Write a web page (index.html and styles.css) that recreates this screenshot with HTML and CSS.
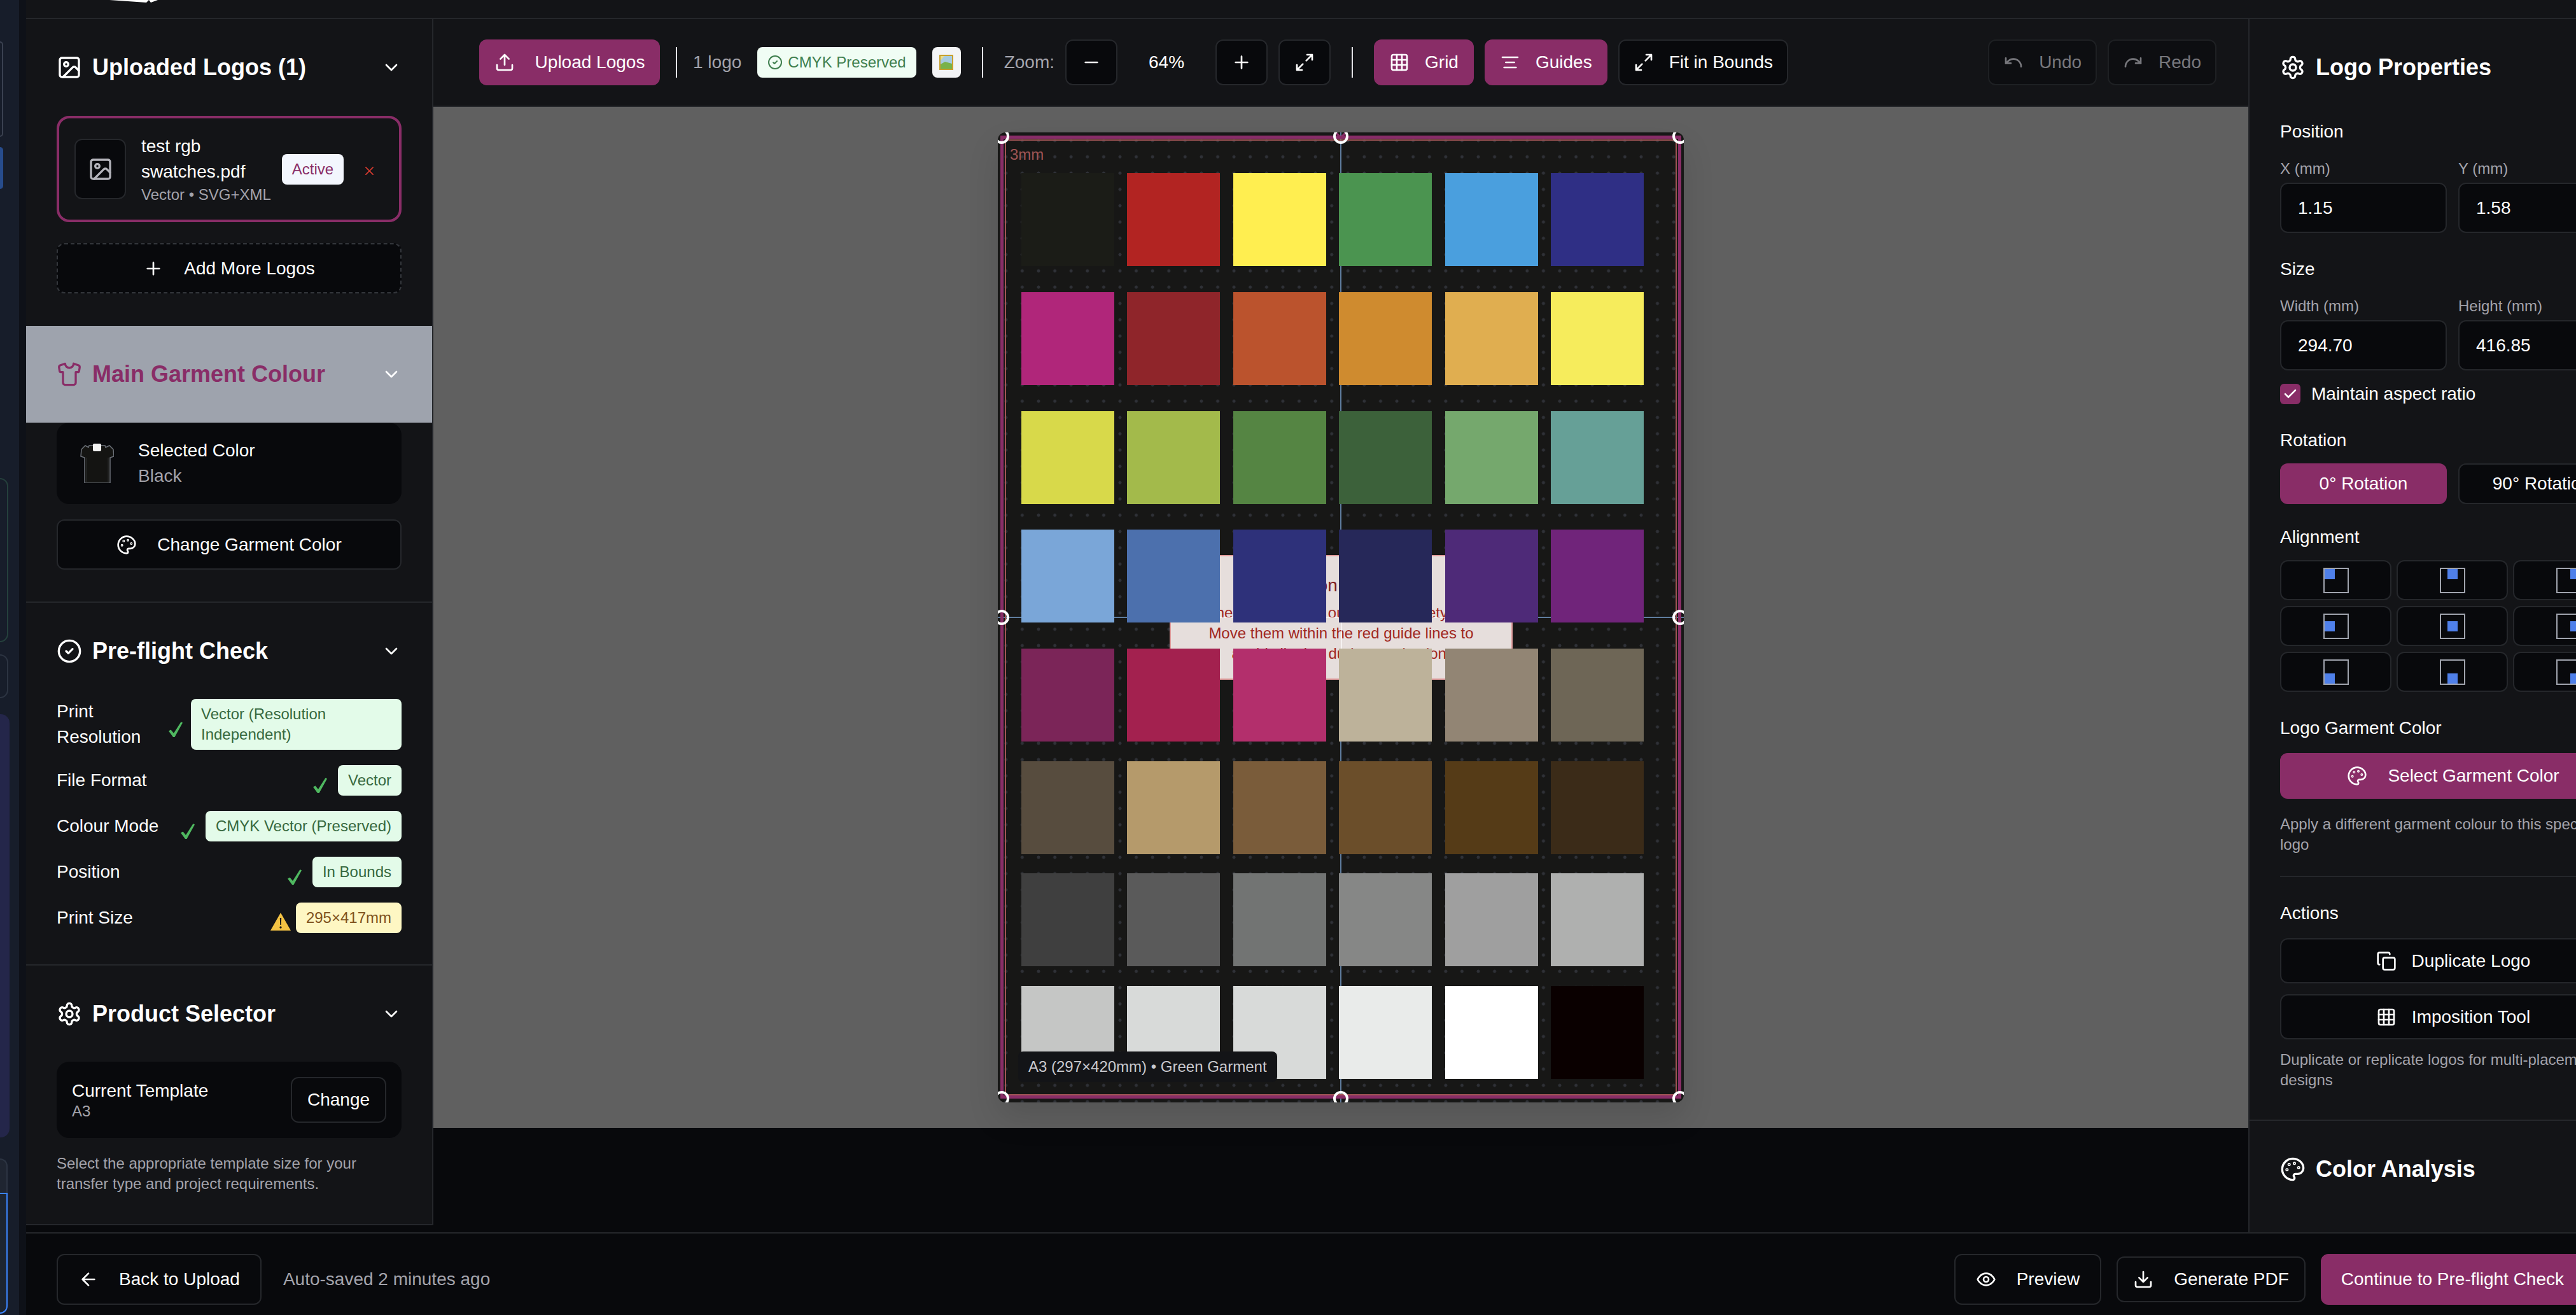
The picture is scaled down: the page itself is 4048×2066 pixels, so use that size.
FILE: index.html
```html
<!DOCTYPE html>
<html lang="en">
<head>
    <meta charset="UTF-8">
    <title>Logo Editor</title>
    <link rel="stylesheet" href="styles.css">
</head>
<body>

    <svg class="sprite" xmlns="http://www.w3.org/2000/svg">
        <symbol id="i-image" viewBox="0 0 24 24"><rect x="3" y="3" width="18" height="18" rx="2"/><circle cx="9" cy="9" r="2"/><path d="m21 15-3.086-3.086a2 2 0 0 0-2.828 0L6 21"/></symbol>
        <symbol id="i-chevron" viewBox="0 0 24 24"><path d="m6 9 6 6 6-6"/></symbol>
        <symbol id="i-plus" viewBox="0 0 24 24"><path d="M5 12h14M12 5v14"/></symbol>
        <symbol id="i-minus" viewBox="0 0 24 24"><path d="M5 12h14"/></symbol>
        <symbol id="i-shirt" viewBox="0 0 24 24"><path d="M20.38 3.46 16 2a4 4 0 0 1-8 0L3.62 3.46a2 2 0 0 0-1.34 2.23l.58 3.47a1 1 0 0 0 .99.84H6v10c0 1.1.9 2 2 2h8a2 2 0 0 0 2-2V10h2.15a1 1 0 0 0 .99-.84l.58-3.47a2 2 0 0 0-1.34-2.23z"/></symbol>
        <symbol id="i-palette" viewBox="0 0 24 24"><circle cx="13.5" cy="6.5" r=".5"/><circle cx="17.5" cy="10.5" r=".5"/><circle cx="8.5" cy="7.5" r=".5"/><circle cx="6.5" cy="12.5" r=".5"/><path d="M12 2C6.5 2 2 6.5 2 12s4.5 10 10 10c.926 0 1.648-.746 1.648-1.688 0-.437-.18-.835-.437-1.125-.29-.289-.438-.652-.438-1.125a1.64 1.64 0 0 1 1.668-1.668h1.996c3.051 0 5.555-2.503 5.555-5.554C21.965 6.012 17.461 2 12 2z"/></symbol>
        <symbol id="i-circle-check" viewBox="0 0 24 24"><circle cx="12" cy="12" r="10"/><path d="m9 12 2 2 4-4"/></symbol>
        <symbol id="i-gear" viewBox="0 0 24 24"><path d="M12.22 2h-.44a2 2 0 0 0-2 2v.18a2 2 0 0 1-1 1.73l-.43.25a2 2 0 0 1-2 0l-.15-.08a2 2 0 0 0-2.73.73l-.22.38a2 2 0 0 0 .73 2.73l.15.1a2 2 0 0 1 1 1.72v.51a2 2 0 0 1-1 1.74l-.15.09a2 2 0 0 0-.73 2.73l.22.38a2 2 0 0 0 2.73.73l.15-.08a2 2 0 0 1 2 0l.43.25a2 2 0 0 1 1 1.73V20a2 2 0 0 0 2 2h.44a2 2 0 0 0 2-2v-.18a2 2 0 0 1 1-1.73l.43-.25a2 2 0 0 1 2 0l.15.08a2 2 0 0 0 2.73-.73l.22-.39a2 2 0 0 0-.73-2.73l-.15-.08a2 2 0 0 1-1-1.74v-.5a2 2 0 0 1 1-1.74l.15-.09a2 2 0 0 0 .73-2.73l-.22-.38a2 2 0 0 0-2.73-.73l-.15.08a2 2 0 0 1-2 0l-.43-.25a2 2 0 0 1-1-1.73V4a2 2 0 0 0-2-2z"/><circle cx="12" cy="12" r="3"/></symbol>
        <symbol id="i-upload" viewBox="0 0 24 24"><path d="M21 15v4a2 2 0 0 1-2 2H5a2 2 0 0 1-2-2v-4M17 8l-5-5-5 5M12 3v12"/></symbol>
        <symbol id="i-download" viewBox="0 0 24 24"><path d="M21 15v4a2 2 0 0 1-2 2H5a2 2 0 0 1-2-2v-4M7 10l5 5 5-5M12 15V3"/></symbol>
        <symbol id="i-expand" viewBox="0 0 24 24"><path d="M15 3h6v6M9 21H3v-6M21 3l-7 7M3 21l7-7"/></symbol>
        <symbol id="i-grid" viewBox="0 0 24 24"><rect x="3" y="3" width="18" height="18" rx="2"/><path d="M3 9h18M3 15h18M9 3v18M15 3v18"/></symbol>
        <symbol id="i-guides" viewBox="0 0 24 24"><path d="M21 6H3M17 12H7M19 18H5"/></symbol>
        <symbol id="i-undo" viewBox="0 0 24 24"><path d="M3 7v6h6"/><path d="M21 17a9 9 0 0 0-9-9 9 9 0 0 0-6 2.3L3 13"/></symbol>
        <symbol id="i-redo" viewBox="0 0 24 24"><path d="M21 7v6h-6"/><path d="M3 17a9 9 0 0 1 9-9 9 9 0 0 1 6 2.3l3 2.7"/></symbol>
        <symbol id="i-back" viewBox="0 0 24 24"><path d="m12 19-7-7 7-7M19 12H5"/></symbol>
        <symbol id="i-eye" viewBox="0 0 24 24"><path d="M2 12s3-7 10-7 10 7 10 7-3 7-10 7-10-7-10-7Z"/><circle cx="12" cy="12" r="3"/></symbol>
        <symbol id="i-copy" viewBox="0 0 24 24"><rect x="8" y="8" width="14" height="14" rx="2"/><path d="M4 16c-1.1 0-2-.9-2-2V4c0-1.1.9-2 2-2h10c1.1 0 2 .9 2 2"/></symbol>
        <symbol id="i-tick" viewBox="0 0 22 24"><path class="fill" d="M0 14.5 3.5 12.5 8 18 19.5 0 22 1.500 9.500 24H7z"/></symbol>
    </svg>

    <!-- the previous step's sidebar, mostly scrolled off the left edge -->
    <aside class="rail">
        <div class="rail-frag rail-frag-1"></div>
        <div class="rail-frag rail-frag-2"></div>
        <div class="rail-frag rail-frag-3"></div>
        <div class="rail-frag rail-frag-4"></div>
        <div class="rail-frag rail-frag-5"></div>
        <div class="rail-frag rail-frag-6"></div>
        <div class="rail-frag rail-frag-7"></div>
    </aside>

    <div class="app">
        <div class="topbar">
            <svg class="topbar-logo" viewBox="0 0 76 5"><path d="M0 0H76L65 4 62 0 58 4z"/></svg>
        </div>

        <div class="workspace">

            <section class="left-panel">
                <div class="section section-logos">
                    <div class="section-head">
                        <svg class="ico ico-head"><use href="#i-image"/></svg>
                        <h2>Uploaded Logos (1)</h2>
                        <svg class="ico chevron"><use href="#i-chevron"/></svg>
                    </div>
                    <div class="logo-card">
                        <div class="logo-thumb"><svg class="ico ico-head"><use href="#i-image"/></svg></div>
                        <div class="logo-info">
                            <div class="logo-name">test rgb swatches.pdf</div>
                            <div class="logo-meta">Vector • SVG+XML</div>
                        </div>
                        <span class="active-pill">Active</span>
                        <svg class="ico remove" viewBox="0 0 24 24"><path d="M3 3l18 18M21 3 3 21"/></svg>
                    </div>
                    <button class="btn btn-wide btn-dashed"><svg class="ico"><use href="#i-plus"/></svg>Add More Logos</button>
                </div>

                <div class="section section-garment">
                    <div class="section-head head-hover">
                        <svg class="ico ico-head"><use href="#i-shirt"/></svg>
                        <h2>Main Garment Colour</h2>
                        <svg class="ico chevron"><use href="#i-chevron"/></svg>
                    </div>
                    <div class="garment-box">
                        <svg class="tee" viewBox="0 0 53 62">
                            <path class="tee-body" d="M14 3H39L40 6 46 3 52 9 53 20 47 22V62H7V22L1 20 2 9 8 3 13 6z"/>
                            <path class="tee-line" d="M10 22V60M44 22V60"/>
                            <rect class="tee-tag" x="20" width="13" height="12" rx="2"/>
                        </svg>
                        <div>
                            <div class="garment-title">Selected Color</div>
                            <div class="garment-value">Black</div>
                        </div>
                    </div>
                    <button class="btn btn-wide btn-change"><svg class="ico"><use href="#i-palette"/></svg>Change Garment Color</button>
                </div>

                <div class="section section-check">
                    <div class="section-head">
                        <svg class="ico ico-head"><use href="#i-circle-check"/></svg>
                        <h2>Pre-flight Check</h2>
                        <svg class="ico chevron"><use href="#i-chevron"/></svg>
                    </div>
                    <div class="check-row row-tight">
                        <span class="check-label">Print Resolution</span>
                        <svg class="tick"><use href="#i-tick"/></svg>
                        <span class="pill pill-wide">Vector (Resolution Independent)</span>
                    </div>
                    <div class="check-row">
                        <span class="check-label">File Format</span>
                        <svg class="tick"><use href="#i-tick"/></svg>
                        <span class="pill">Vector</span>
                    </div>
                    <div class="check-row">
                        <span class="check-label">Colour Mode</span>
                        <svg class="tick"><use href="#i-tick"/></svg>
                        <span class="pill">CMYK Vector (Preserved)</span>
                    </div>
                    <div class="check-row">
                        <span class="check-label">Position</span>
                        <svg class="tick"><use href="#i-tick"/></svg>
                        <span class="pill">In Bounds</span>
                    </div>
                    <div class="check-row">
                        <span class="check-label">Print Size</span>
                        <svg class="warn-ico" viewBox="0 0 32 28">
                            <path class="warn-tri" d="M16 0 32 28H0z"/>
                            <path class="warn-mark" d="M14.800 8h2.400l-.4 11h-1.600z"/>
                            <circle class="warn-mark" cx="16" cy="23" r="1.700"/>
                        </svg>
                        <span class="pill pill-warn">295×417mm</span>
                    </div>
                </div>

                <div class="section section-product">
                    <div class="section-head">
                        <svg class="ico ico-head"><use href="#i-gear"/></svg>
                        <h2>Product Selector</h2>
                        <svg class="ico chevron"><use href="#i-chevron"/></svg>
                    </div>
                    <div class="template-box">
                        <div>
                            <div class="template-title">Current Template</div>
                            <div class="template-value">A3</div>
                        </div>
                        <button class="btn btn-small">Change</button>
                    </div>
                    <p class="help">Select the appropriate template size for your transfer type and project requirements.</p>
                </div>
            </section>

            <section class="center">
                <div class="toolbar">
                    <div class="tool-group tool-group-first">
                        <button class="btn btn-primary btn-upload"><svg class="ico"><use href="#i-upload"/></svg>Upload Logos</button>
                        <span class="vr"></span>
                        <span class="muted">1 logo</span>
                        <span class="cmyk-pill"><svg class="ico ico-sm"><use href="#i-circle-check"/></svg>CMYK Preserved</span>
                        <span class="thumb-chip">
                            <svg viewBox="0 0 22 24" class="frame">
                                <rect width="22" height="24" fill="#c7a02e"/>
                                <rect x="2" y="2" width="18" height="20" fill="#a7cbe0"/>
                                <path d="M2 15 9 11 20 14V22H2z" fill="#79b24a"/>
                                <path d="M2 2H8L3 8 2 8z" fill="#e8dc8a"/>
                            </svg>
                        </span>
                    </div>
                    <span class="vr"></span>
                    <div class="tool-group">
                        <span class="muted">Zoom:</span>
                        <button class="btn btn-icon"><svg class="ico"><use href="#i-minus"/></svg></button>
                        <span class="zoom-value">64%</span>
                        <button class="btn btn-icon"><svg class="ico"><use href="#i-plus"/></svg></button>
                        <button class="btn btn-icon"><svg class="ico"><use href="#i-expand"/></svg></button>
                    </div>
                    <span class="vr"></span>
                    <div class="tool-group">
                        <button class="btn btn-primary btn-tool"><svg class="ico"><use href="#i-grid"/></svg>Grid</button>
                        <button class="btn btn-primary btn-tool"><svg class="ico"><use href="#i-guides"/></svg>Guides</button>
                        <button class="btn btn-tool"><svg class="ico"><use href="#i-expand"/></svg>Fit in Bounds</button>
                    </div>
                    <div class="tool-group tool-history">
                        <button class="btn btn-tool btn-disabled"><svg class="ico"><use href="#i-undo"/></svg>Undo</button>
                        <button class="btn btn-tool btn-disabled"><svg class="ico"><use href="#i-redo"/></svg>Redo</button>
                    </div>
                </div>

                <div class="canvas">
                    <div class="artboard">
                        <span class="guide guide-v"></span>
                        <span class="guide guide-h"></span>

                        <div class="warning">
                            <div class="warning-title">Position Warning</div>
                            <p>The logos extend outside the safety line<br>Move them within the red guide lines to<br>avoid clipping during production.</p>
                        </div>

                        <div class="swatches">
                            <i></i><i></i><i></i><i></i><i></i><i></i>
                            <i></i><i></i><i></i><i></i><i></i><i></i>
                            <i></i><i></i><i></i><i></i><i></i><i></i>
                            <i></i><i></i><i></i><i></i><i></i><i></i>
                            <i></i><i></i><i></i><i></i><i></i><i></i>
                            <i></i><i></i><i></i><i></i><i></i><i></i>
                            <i></i><i></i><i></i><i></i><i></i><i></i>
                            <i></i><i></i><i></i><i></i><i></i><i></i>
                        </div>

                        <div class="selection"></div>
                        <div class="safe-line"></div>
                        <span class="safe-label">3mm</span>

                        <span class="rotate-mark"></span>
                        <span class="handle h-tl"></span>
                        <span class="handle h-tc"></span>
                        <span class="handle h-tr"></span>
                        <span class="handle h-ml"></span>
                        <span class="handle h-mr"></span>
                        <span class="handle h-bl"></span>
                        <span class="handle h-bc"></span>
                        <span class="handle h-br"></span>

                        <div class="board-caption">A3 (297×420mm) • Green Garment</div>
                    </div>
                </div>
            </section>

            <section class="right-panel">
                <div class="props">
                    <div class="section-head props-head">
                        <svg class="ico ico-head"><use href="#i-gear"/></svg>
                        <h2>Logo Properties</h2>
                    </div>

                    <div class="prop-block block-position">
                        <div class="prop-label">Position</div>
                        <div class="two-col">
                            <div>
                                <div class="field-label">X (mm)</div>
                                <div class="input">1.15</div>
                            </div>
                            <div>
                                <div class="field-label">Y (mm)</div>
                                <div class="input">1.58</div>
                            </div>
                        </div>
                    </div>

                    <div class="prop-block">
                        <div class="prop-label">Size</div>
                        <div class="two-col">
                            <div>
                                <div class="field-label">Width (mm)</div>
                                <div class="input">294.70</div>
                            </div>
                            <div>
                                <div class="field-label">Height (mm)</div>
                                <div class="input">416.85</div>
                            </div>
                        </div>
                        <div class="checkbox-row">
                            <span class="checkbox"><svg class="ico ico-check" viewBox="0 0 24 24"><path d="M20 6 9 17l-5-5"/></svg></span>
                            Maintain aspect ratio
                        </div>
                    </div>

                    <div class="prop-block">
                        <div class="prop-label prop-label-tight">Rotation</div>
                        <div class="two-col">
                            <button class="btn btn-primary btn-rotate">0° Rotation</button>
                            <button class="btn btn-rotate">90° Rotation</button>
                        </div>
                    </div>

                    <div class="prop-block block-align">
                        <div class="prop-label prop-label-tight">Alignment</div>
                        <div class="align-grid">
                            <button class="align-btn"><span class="align-box a-tl"><b></b></span></button>
                            <button class="align-btn"><span class="align-box a-tc"><b></b></span></button>
                            <button class="align-btn"><span class="align-box a-tr"><b></b></span></button>
                            <button class="align-btn"><span class="align-box a-ml"><b></b></span></button>
                            <button class="align-btn"><span class="align-box a-mc"><b></b></span></button>
                            <button class="align-btn"><span class="align-box a-mr"><b></b></span></button>
                            <button class="align-btn"><span class="align-box a-bl"><b></b></span></button>
                            <button class="align-btn"><span class="align-box a-bc"><b></b></span></button>
                            <button class="align-btn"><span class="align-box a-br"><b></b></span></button>
                        </div>
                    </div>

                    <div class="prop-block">
                        <div class="prop-label prop-label-btn">Logo Garment Color</div>
                        <button class="btn btn-primary btn-wide btn-select"><svg class="ico"><use href="#i-palette"/></svg>Select Garment Color</button>
                        <p class="help help-gap">Apply a different garment colour to this specific logo</p>
                    </div>

                    <hr class="rule">

                    <div class="prop-block block-actions">
                        <div class="prop-label prop-label-btn">Actions</div>
                        <button class="btn btn-wide btn-action"><svg class="ico"><use href="#i-copy"/></svg>Duplicate Logo</button>
                        <button class="btn btn-wide btn-action btn-action-2"><svg class="ico"><use href="#i-grid"/></svg>Imposition Tool</button>
                        <p class="help help-gap-sm">Duplicate or replicate logos for multi-placement designs</p>
                    </div>
                </div>

                <div class="color-analysis">
                    <div class="section-head">
                        <svg class="ico ico-head"><use href="#i-palette"/></svg>
                        <h2>Color Analysis</h2>
                    </div>
                </div>
            </section>
        </div>

        <footer class="footer">
            <div class="footer-side footer-back">
                <button class="btn btn-foot"><svg class="ico"><use href="#i-back"/></svg>Back to Upload</button>
                <span class="muted">Auto-saved 2 minutes ago</span>
            </div>
            <div class="footer-side footer-actions">
                <button class="btn btn-foot"><svg class="ico"><use href="#i-eye"/></svg>Preview</button>
                <button class="btn btn-foot btn-pdf"><svg class="ico"><use href="#i-download"/></svg>Generate PDF</button>
                <button class="btn btn-primary btn-foot btn-continue">Continue to Pre-flight Check</button>
            </div>
        </footer>
    </div>

</body>
</html>
```

FILE: styles.css
```css
:root
{
    --panel: #131417;
    --ink: #08090c;
    --line: #25272b;
    --brand: #892d67;
    --muted: #a3a3ab;
}

*
{
    box-sizing: border-box;
    padding: 0;
    margin: 0;
}

html, body
{
    width: 4048px;
    height: 2066px;
    overflow: hidden;
}

body
{
    display: flex;
    background-color: var(--ink);
    color: #fff;
    font-family: "Liberation Sans", Arial, sans-serif;
    font-size: 28px;
    line-height: 40px;
}

.sprite
{
    width: 0;
    height: 0;
    position: absolute;
}

.ico
{
    flex: none;
    width: 32px;
    height: 32px;
    fill: none;
    stroke: currentColor;
    stroke-width: 2;
    stroke-linecap: round;
    stroke-linejoin: round;
}

.ico-head
{
    width: 40px;
    height: 40px;
}

.ico-sm
{
    width: 24px;
    height: 24px;
}

/* rail */

.rail
{
    flex: none;
    width: 41px;
    height: 100%;
    padding-right: 30px;
    background: linear-gradient(to right, #171d2a 30px, #0e1118 30px);
    overflow: hidden;
}

.rail-frag { width: 11px; }

.rail-frag-1
{
    width: 5px;
    height: 150px;
    margin-top: 65px;
    border: 2px solid #3a4150;
    border-left: 0;
    border-radius: 0 5px 5px 0;
}

.rail-frag-2
{
    width: 5px;
    height: 66px;
    margin-top: 16px;
    background-color: #274c8c;
    border-radius: 0 5px 5px 0;
}

.rail-frag-3
{
    width: 13px;
    height: 258px;
    margin-top: 454px;
    border: 2px solid #25403c;
    border-left: 0;
    border-radius: 0 14px 14px 0;
}

.rail-frag-4
{
    width: 13px;
    height: 69px;
    margin-top: 19px;
    border: 2px solid #2c3442;
    border-left: 0;
    border-radius: 0 14px 14px 0;
}

.rail-frag-5
{
    width: 15px;
    height: 665px;
    margin-top: 25px;
    background-color: #24264a;
    border-radius: 0 14px 14px 0;
}

.rail-frag-6
{
    width: 12px;
    height: 54px;
    margin-top: 33px;
    background-color: #1f2531;
    border: 2px solid #2c3442;
    border-bottom: 0;
    border-left: 0;
    border-radius: 0 14px 0 0;
}

.rail-frag-7
{
    width: 12px;
    height: 190px;
    background-color: #1d2531;
    border: 2px solid #3b82f6;
    border-left: 0;
    border-radius: 0 0 14px 0;
}

/* frame */

.app
{
    flex: none;
    display: flex;
    flex-flow: column nowrap;
    width: 4134px;
    height: 100%;
}

.topbar
{
    flex: none;
    height: 30px;
    background-color: var(--panel);
    border-bottom: 2px solid var(--line);
}

.topbar-logo
{
    display: block;
    width: 76px;
    height: 5px;
    margin-left: 131px;
    fill: #fff;
}

.workspace
{
    flex: none;
    display: flex;
    height: 1906px;
}

/* left panel */

.left-panel
{
    flex: none;
    width: 640px;
    height: 1895px;
    background-color: var(--panel);
    border-right: 2px solid var(--line);
    border-bottom: 2px solid var(--line);
}

.section
{
    padding: 0 48px;
}

.section-head
{
    display: flex;
    align-items: center;
    gap: 16px;
    height: 152px;
}

.section-head h2
{
    flex: 1;
    font-size: 36px;
    font-weight: bold;
    line-height: 48px;
}

.head-hover
{
    margin: 0 -48px;
    padding: 0 48px;
    background-color: #9ea3ad;
    color: var(--brand);
}

.chevron
{
    color: #fff;
}

.section-logos
{
    height: 482px;
}

.logo-card
{
    display: flex;
    align-items: center;
    height: 167px;
    padding: 0 39px 0 24px;
    margin-bottom: 33px;
    border: 4px solid var(--brand);
    border-radius: 20px;
}

.logo-thumb
{
    flex: none;
    display: flex;
    align-items: center;
    justify-content: center;
    width: 81px;
    height: 95px;
    margin-right: 24px;
    background-color: var(--ink);
    border: 2px solid var(--line);
    border-radius: 12px;
    color: #b4b4bb;
}

.logo-info
{
    flex: 1;
    min-width: 0;
}

.logo-name
{
    width: 200px;
}

.logo-meta
{
    font-size: 24px;
    line-height: 32px;
    color: var(--muted);
    white-space: nowrap;
}

.active-pill
{
    flex: none;
    display: flex;
    align-items: center;
    justify-content: center;
    width: 97px;
    height: 48px;
    margin-right: 33px;
    border-radius: 8px;
    background-color: #f3f6fd;
    color: var(--brand);
    font-size: 24px;
}

.remove
{
    width: 15px;
    height: 15px;
    margin-top: 6px;
    color: #c9382e;
    stroke-width: 3;
}

/* buttons */

.btn
{
    display: flex;
    align-items: center;
    justify-content: center;
    gap: 32px;
    background-color: var(--ink);
    border: 2px solid var(--line);
    border-radius: 12px;
    color: #fff;
    font: inherit;
    white-space: nowrap;
}

.btn-wide
{
    width: 100%;
}

.btn-dashed
{
    height: 79px;
    border-style: dashed;
    border-color: #33363b;
}

.btn-primary
{
    background-color: var(--brand);
    border-color: var(--brand);
}

.btn-change
{
    height: 79px;
    margin-top: 24px;
}

.btn-small
{
    width: 150px;
    height: 72px;
}

.btn-upload
{
    width: 284px;
    height: 72px;
}

.btn-icon
{
    width: 82px;
    height: 72px;
}

.btn-tool
{
    gap: 24px;
    height: 72px;
    padding: 0 22px;
}

.btn-disabled
{
    background-color: #0d0e11;
    border-color: #1e2023;
    color: #77777c;
}

.btn-rotate
{
    height: 64px;
}

.btn-select
{
    height: 72px;
}

.btn-action
{
    height: 71px;
    gap: 24px;
}

.btn-action-2
{
    margin-top: 17px;
}

.btn-foot
{
    height: 80px;
    padding: 0 32px;
}

.btn-pdf
{
    height: 72px;
    padding: 0 24px;
}

.btn-continue
{
    padding: 0 30px;
}

/* garment */

.section-garment
{
    height: 435px;
    border-bottom: 2px solid var(--line);
}

.garment-box
{
    display: flex;
    align-items: center;
    gap: 38px;
    height: 128px;
    padding-left: 37px;
    background-color: var(--ink);
    border-radius: 20px;
}

.tee
{
    flex: none;
    width: 53px;
    height: 62px;
}

.tee-body
{
    fill: #141412;
    stroke: #6b7078;
    stroke-width: 1.500;
}

.tee-line
{
    fill: none;
    stroke: #2d2e2e;
    stroke-width: 1;
}

.tee-tag
{
    fill: #f2f2f2;
}

.garment-value
{
    color: var(--muted);
}

/* pre-flight */

.section-check
{
    height: 570px;
    border-bottom: 2px solid var(--line);
}

.section-check .section-head
{
    height: 151px;
}

.check-row
{
    display: flex;
    align-items: center;
    gap: 17px;
    margin-bottom: 24px;
}

.row-tight
{
    gap: 13px;
}

.check-label
{
    flex: 1;
}

.tick
{
    flex: none;
    width: 22px;
    height: 24px;
    margin-top: 16px;
    fill: #4fb860;
}

.warn-ico
{
    flex: none;
    width: 32px;
    height: 28px;
    margin: 12px -9px 0 0;
}

.warn-tri { fill: #f3c243; }
.warn-mark { fill: #1b1b1b; }

.pill
{
    flex: none;
    padding: 8px 16px;
    border-radius: 8px;
    background-color: #e3fbe9;
    color: #37693f;
    font-size: 24px;
    line-height: 32px;
}

.pill-wide
{
    width: 331px;
}

.pill-warn
{
    background-color: #fef7c3;
    color: #80521c;
}

/* product */

.section-product .section-head
{
    height: 151px;
}

.template-box
{
    display: flex;
    align-items: center;
    justify-content: space-between;
    height: 120px;
    padding: 0 24px;
    background-color: var(--ink);
    border-radius: 20px;
}

.template-value
{
    margin-top: -4px;
    font-size: 24px;
    line-height: 32px;
    color: var(--muted);
}

.help
{
    font-size: 24px;
    line-height: 32px;
    color: var(--muted);
}

.section-product .help
{
    margin-top: 24px;
}

/* centre */

.center
{
    flex: none;
    width: 2852px;
    display: flex;
    flex-flow: column nowrap;
}

.toolbar
{
    flex: none;
    display: flex;
    align-items: center;
    gap: 33px;
    height: 138px;
    padding: 0 50px 0 72px;
    background-color: var(--panel);
    border-bottom: 2px solid var(--line);
}

.tool-group
{
    display: flex;
    align-items: center;
    gap: 17px;
}

.tool-group-first
{
    gap: 25px;
}

.tool-history
{
    margin-left: auto;
}

.vr
{
    flex: none;
    width: 2px;
    height: 48px;
    background-color: #e2e2e6;
}

.muted
{
    color: var(--muted);
}

.cmyk-pill
{
    display: flex;
    align-items: center;
    gap: 8px;
    height: 48px;
    padding: 0 16px;
    border-radius: 8px;
    background-color: #f0fdf4;
    color: #3f7f4e;
    font-size: 24px;
}

.thumb-chip
{
    display: flex;
    align-items: center;
    justify-content: center;
    width: 45px;
    height: 48px;
    border-radius: 8px;
    background-color: #f3f4f6;
}

.frame
{
    width: 22px;
    height: 24px;
}

.zoom-value
{
    width: 120px;
    text-align: center;
}

.canvas
{
    flex: none;
    display: flex;
    align-items: center;
    justify-content: center;
    height: 1604px;
    background-color: #606060;
}

.artboard
{
    position: relative;
    flex: none;
    width: 1078px;
    height: 1524px;
    overflow: hidden;
    border-radius: 12px;
    background-color: #171716;
    background-image: radial-gradient(circle, #2f3137 2.200px, transparent 2.800px);
    background-size: 25.6px 25.6px;
    box-shadow: 0 24px 50px rgba(0, 0, 0, 0.12);
}

.guide
{
    position: absolute;
    background-color: #5f7d9f;
}

.guide-v
{
    left: 538px;
    top: 0;
    width: 2px;
    height: 100%;
}

.guide-h
{
    left: 0;
    top: 761px;
    width: 100%;
    height: 2px;
}

.warning
{
    position: absolute;
    left: 270px;
    top: 664px;
    width: 539px;
    height: 196px;
    padding-top: 26px;
    background-color: #e6dedc;
    border: 2px solid #e09b9b;
    text-align: center;
    color: #a1281f;
    font-size: 24px;
    line-height: 32px;
}

/* the canvas guides show through the warning as pale hairlines */
.warning::before,
.warning::after
{
    content: "";
    position: absolute;
    background-color: rgba(255, 255, 255, 0.6);
}

.warning::before
{
    left: 267px;
    top: 0;
    width: 2px;
    height: 100%;
}

.warning::after
{
    left: 0;
    top: 95px;
    width: 100%;
    height: 2px;
}

.warning-title
{
    margin-bottom: 7px;
    color: #7f1d1d;
    font-size: 28px;
    line-height: 40px;
}

.swatches
{
    position: absolute;
    left: 37px;
    top: 64px;
    display: grid;
    grid-template-columns: repeat(6, 146px);
    grid-template-rows: 187px 187px 186px 187px 177px 176px 177px 146px;
    column-gap: 20.4px;
}

.swatches i
{
    display: block;
    height: 146px;
}

.swatches i:nth-child(1) { background-color: #1b1c17; }
.swatches i:nth-child(2) { background-color: #b22422; }
.swatches i:nth-child(3) { background-color: #ffee50; }
.swatches i:nth-child(4) { background-color: #4b9450; }
.swatches i:nth-child(5) { background-color: #4a9fde; }
.swatches i:nth-child(6) { background-color: #2f2f85; }
.swatches i:nth-child(7) { background-color: #b0267a; }
.swatches i:nth-child(8) { background-color: #8f252a; }
.swatches i:nth-child(9) { background-color: #bb532d; }
.swatches i:nth-child(10) { background-color: #cf8b2f; }
.swatches i:nth-child(11) { background-color: #e0ae50; }
.swatches i:nth-child(12) { background-color: #f6ec5c; }
.swatches i:nth-child(13) { background-color: #d8d94a; }
.swatches i:nth-child(14) { background-color: #a3ba4b; }
.swatches i:nth-child(15) { background-color: #558543; }
.swatches i:nth-child(16) { background-color: #3c613a; }
.swatches i:nth-child(17) { background-color: #75a86d; }
.swatches i:nth-child(18) { background-color: #66a097; }
.swatches i:nth-child(19) { background-color: #7aa6d8; }
.swatches i:nth-child(20) { background-color: #4c70ad; }
.swatches i:nth-child(21) { background-color: #2e317a; }
.swatches i:nth-child(22) { background-color: #262859; }
.swatches i:nth-child(23) { background-color: #4e2a78; }
.swatches i:nth-child(24) { background-color: #70247a; }
.swatches i:nth-child(25) { background-color: #7b2558; }
.swatches i:nth-child(26) { background-color: #a3214f; }
.swatches i:nth-child(27) { background-color: #b32f6c; }
.swatches i:nth-child(28) { background-color: #bdb29a; }
.swatches i:nth-child(29) { background-color: #928574; }
.swatches i:nth-child(30) { background-color: #6e6656; }
.swatches i:nth-child(31) { background-color: #574c3e; }
.swatches i:nth-child(32) { background-color: #b59a6b; }
.swatches i:nth-child(33) { background-color: #7a5c3a; }
.swatches i:nth-child(34) { background-color: #6b4e2a; }
.swatches i:nth-child(35) { background-color: #553b17; }
.swatches i:nth-child(36) { background-color: #3b2b18; }
.swatches i:nth-child(37) { background-color: #3f3f3f; }
.swatches i:nth-child(38) { background-color: #5a5a5a; }
.swatches i:nth-child(39) { background-color: #727473; }
.swatches i:nth-child(40) { background-color: #868786; }
.swatches i:nth-child(41) { background-color: #9f9f9f; }
.swatches i:nth-child(42) { background-color: #afb0af; }
.swatches i:nth-child(43) { background-color: #c5c6c5; }
.swatches i:nth-child(44) { background-color: #d8dad9; }
.swatches i:nth-child(45) { background-color: #d8dad9; }
.swatches i:nth-child(46) { background-color: #e9ebea; }
.swatches i:nth-child(47) { background-color: #ffffff; }
.swatches i:nth-child(48) { background-color: #0a0000; }

.selection
{
    position: absolute;
    left: 4px;
    top: 5px;
    right: 4px;
    bottom: 6px;
    border: 5px solid var(--brand);
}

.safe-line
{
    position: absolute;
    left: 11px;
    top: 11px;
    right: 11px;
    bottom: 11px;
    border: 2px solid #a05555;
}

.safe-label
{
    position: absolute;
    left: 19px;
    top: 20px;
    color: #a05555;
    font-size: 24px;
    line-height: 30px;
}

.rotate-mark
{
    position: absolute;
    left: 524px;
    top: -26px;
    width: 30px;
    height: 30px;
    border: 3px solid var(--brand);
    border-radius: 4px;
    transform: rotate(45deg);
}

.handle
{
    position: absolute;
    width: 24px;
    height: 24px;
    margin: -12px 0 0 -12px;
    border: 4px solid #fff;
    border-radius: 50%;
}

.h-tl { left: 6px; top: 6px; }
.h-tc { left: 539px; top: 6px; }
.h-tr { left: 1072px; top: 6px; }
.h-ml { left: 6px; top: 762px; }
.h-mr { left: 1072px; top: 762px; }
.h-bl { left: 6px; top: 1518px; }
.h-bc { left: 539px; top: 1518px; }
.h-br { left: 1072px; top: 1518px; }

.board-caption
{
    position: absolute;
    left: 32px;
    top: 1444px;
    height: 48px;
    padding: 0 16px;
    border-radius: 8px;
    background-color: var(--panel);
    color: #c9c9ce;
    font-size: 24px;
    line-height: 48px;
}

/* right panel */

.right-panel
{
    flex: none;
    width: 642px;
    background-color: var(--panel);
    border-left: 2px solid var(--line);
}

.props
{
    height: 1731px;
    padding: 45px 48px 0;
    border-bottom: 2px solid var(--line);
}

.props-head
{
    height: 62px;
}

.prop-block
{
    margin-top: 37px;
}

.block-position
{
    margin-top: 50px;
}

.block-align
{
    margin-top: 32px;
}

.block-actions
{
    margin-top: 37px;
}

.prop-label
{
    margin-bottom: 22px;
}

.prop-label-tight
{
    margin-bottom: 16px;
}

.prop-label-btn
{
    margin-bottom: 19px;
}

.two-col
{
    display: grid;
    grid-template-columns: 262px 262px;
    column-gap: 18px;
}

.field-label
{
    margin-bottom: 6px;
    font-size: 24px;
    line-height: 32px;
    color: var(--muted);
}

.input
{
    display: flex;
    align-items: center;
    height: 79px;
    padding-left: 26px;
    background-color: var(--ink);
    border: 2px solid var(--line);
    border-radius: 12px;
}

.checkbox-row
{
    display: flex;
    align-items: center;
    gap: 17px;
    height: 32px;
    margin-top: 21px;
}

.checkbox
{
    display: flex;
    align-items: center;
    justify-content: center;
    width: 32px;
    height: 32px;
    border-radius: 6px;
    background-color: var(--brand);
}

.ico-check
{
    width: 24px;
    height: 24px;
    stroke-width: 2.500;
}

.align-grid
{
    display: grid;
    grid-template-columns: repeat(3, 175px);
    grid-auto-rows: 63px;
    gap: 9px 8px;
}

.align-btn
{
    display: flex;
    align-items: center;
    justify-content: center;
    background-color: var(--ink);
    border: 2px solid var(--line);
    border-radius: 12px;
}

.align-box
{
    display: flex;
    width: 40px;
    height: 40px;
    border: 2px solid #a0a4ae;
}

.align-box b
{
    width: 16px;
    height: 16px;
    background-color: #4f80ea;
}

.a-tc, .a-mc, .a-bc { justify-content: center; }
.a-tr, .a-mr, .a-br { justify-content: flex-end; }
.a-ml, .a-mc, .a-mr { align-items: center; }
.a-bl, .a-bc, .a-br { align-items: flex-end; }

.help-gap
{
    margin-top: 24px;
}

.help-gap-sm
{
    margin-top: 16px;
}

.rule
{
    height: 2px;
    margin-top: 33px;
    border: 0;
    background-color: var(--line);
}

.color-analysis
{
    height: 152px;
    padding: 0 48px;
}

/* footer */

.footer
{
    flex: none;
    display: flex;
    align-items: flex-start;
    justify-content: space-between;
    height: 130px;
    padding: 32px 114px 0 48px;
    background-color: var(--ink);
    border-top: 2px solid var(--line);
}

.footer-side
{
    display: flex;
    align-items: center;
    gap: 24px;
}

.footer-back
{
    gap: 34px;
}
```
